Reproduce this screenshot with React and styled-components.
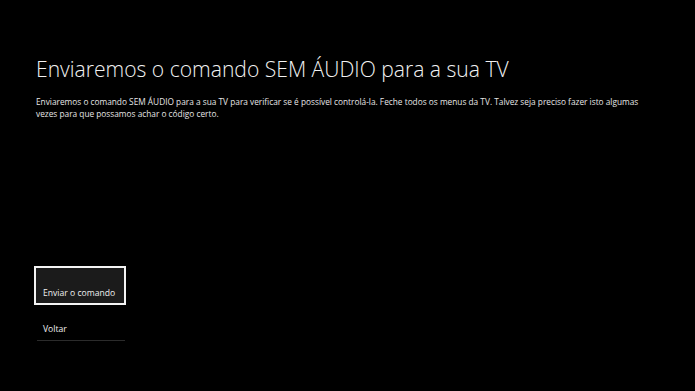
import styled, { createGlobalStyle } from "styled-components";

const GlobalStyle = createGlobalStyle`
  html, body {
    margin: 0;
    padding: 0;
    background: #000;
  }
  body {
    font-family: "Open Sans", "Noto Sans", sans-serif;
    color: #fff;
  }
`;

const Screen = styled.div`
  width: 695px;
  height: 391px;
  background: #000;
  display: flex;
  flex-direction: column;
  justify-content: space-between;
  padding: 54px 0 50px 34px;
  box-sizing: border-box;
  overflow: hidden;
`;

const Header = styled.div`
  display: flex;
  flex-direction: column;
  padding-left: 2px;
`;

const Title = styled.h1`
  margin: 0;
  font-size: 21.1px;
  font-weight: 300;
  line-height: 29px;
  color: #f2f2f2;
`;

const Description = styled.p`
  margin: 13px 0 0;
  width: 610px;
  font-size: 8.3px;
  line-height: 12px;
  color: #e6e6e6;
`;

const Menu = styled.div`
  display: flex;
  flex-direction: column;
  gap: 10px;
  width: 92px;
`;

const MenuItem = styled.button`
  display: flex;
  align-items: flex-end;
  box-sizing: border-box;
  width: ${(p) => (p.$focused ? "92px" : "88px")};
  margin-left: ${(p) => (p.$focused ? "0" : "3px")};
  height: ${(p) => (p.$focused ? "39px" : "26px")};
  padding: 0 0 ${(p) => (p.$focused ? "4px" : "5px")}
    ${(p) => (p.$focused ? "7px" : "6px")};
  border: ${(p) => (p.$focused ? "2px solid #f4f4f4" : "0")};
  border-bottom: ${(p) =>
    p.$focused ? "2px solid #f4f4f4" : "1px solid #2b2b2b"};
  background: ${(p) => (p.$focused ? "#1b1b1b" : "transparent")};
  color: #f0f0f0;
  font-family: "Open Sans", "Noto Sans", sans-serif;
  font-size: 8.6px;
  text-align: left;
  cursor: pointer;
`;

export default function App() {
  return (
    <>
      <GlobalStyle />
      <Screen>
        <Header>
          <Title>Enviaremos o comando SEM ÁUDIO para a sua TV</Title>
          <Description>
            Enviaremos o comando SEM ÁUDIO para a sua TV para verificar se é
            possível controlá-la. Feche todos os menus da TV. Talvez seja
            preciso fazer isto algumas vezes para que possamos achar o código
            certo.
          </Description>
        </Header>
        <Menu>
          <MenuItem $focused>Enviar o comando</MenuItem>
          <MenuItem>Voltar</MenuItem>
        </Menu>
      </Screen>
    </>
  );
}
